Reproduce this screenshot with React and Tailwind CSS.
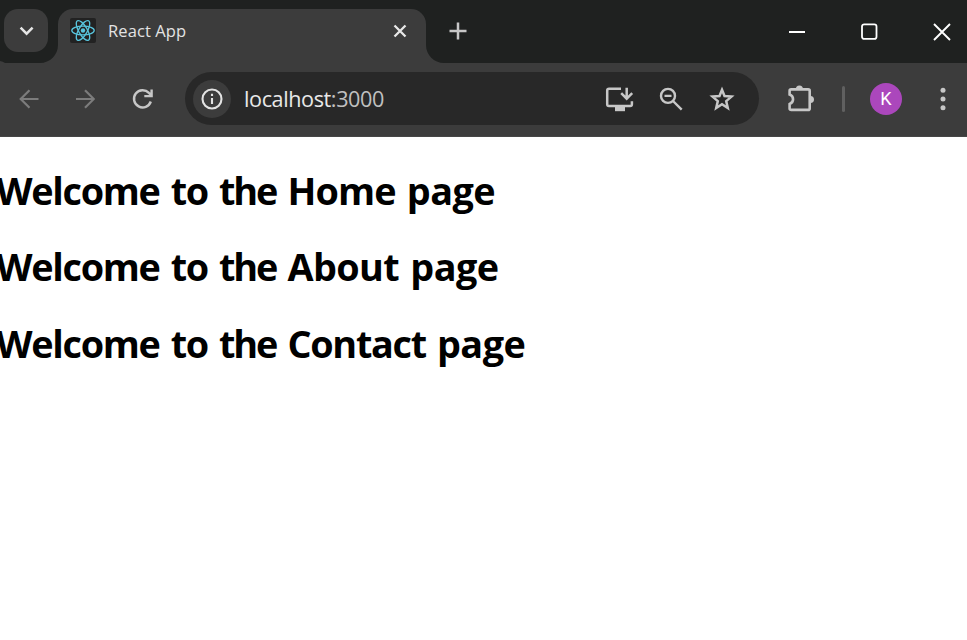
import React from 'react';

const ui = "font-['Open_Sans','Noto_Sans',sans-serif]";

function ReactLogo() {
  return (
    <svg width="26" height="25" viewBox="0 0 26 25" fill="none" stroke="#58c4dc" strokeWidth="1.3" className="shrink-0 rounded-[2px] bg-[#222222]">
      <ellipse cx="13" cy="12.5" rx="11.2" ry="4.3" />
      <ellipse cx="13" cy="12.5" rx="11.2" ry="4.3" transform="rotate(60 13 12.5)" />
      <ellipse cx="13" cy="12.5" rx="11.2" ry="4.3" transform="rotate(120 13 12.5)" />
      <circle cx="13" cy="12.5" r="2.2" fill="#58c4dc" stroke="none" />
    </svg>
  );
}

function TitleBar() {
  return (
    <div className="relative flex h-[62.5px] bg-[#1f2120] pl-1">
      <svg className="absolute bottom-0 left-0" width="5" height="3" fill="#3c3c3c"><path d="M0 1Q3 1.4 5 3H0Z" /></svg>
      <button className="mt-[9px] flex h-[43px] w-11 shrink-0 items-center justify-center rounded-[14px] bg-[#3c3c3c]">
        <svg width="16" height="12" viewBox="0 0 16 12" fill="none" stroke="#e6e6e6" strokeWidth="2.5"><path d="M2.6 2.7l6 6 6-6" /></svg>
      </button>
      <div className="relative mt-[8.5px] ml-[9.5px] flex h-[54px] w-[368px] shrink-0 rounded-t-[15px] bg-[#3c3c3c] pl-[12.5px]">
        <svg className="absolute bottom-0 -left-[18px]" width="18" height="18" fill="#3c3c3c"><path d="M18 0C18 10 10 18 0 18H18Z" /></svg>
        <svg className="absolute -right-[18px] bottom-0" width="18" height="18" fill="#3c3c3c"><path d="M0 0C0 10 8 18 18 18H0Z" /></svg>
        <div className="flex h-11 w-full items-center">
          <ReactLogo />
          <span className={`ml-3 w-[285px] text-[16.5px] leading-6 tracking-[0.1px] text-[#e3e3e3] ${ui}`}>React App</span>
          <svg width="14" height="14" viewBox="0 0 14 14" stroke="#e8e8e8" strokeWidth="2.3"><path d="M1.5 1.5l11 11M12.5 1.5l-11 11" /></svg>
        </div>
      </div>
      <svg className="mt-[22px] ml-[23px] shrink-0" width="18" height="18" viewBox="0 0 18 18" stroke="#c7c7c7" strokeWidth="2.5"><path d="M.5 9h17M9 .5v17" /></svg>
      <div className="mt-[22px] ml-auto flex items-center self-start pr-4 text-white">
        <svg className="mr-[54px]" width="18" height="20" viewBox="0 0 18 20" stroke="currentColor" strokeWidth="2"><path d="M0 10h16" /></svg>
        <svg className="mr-[54px]" width="18" height="20" viewBox="0 0 18 20" fill="none" stroke="currentColor" strokeWidth="1.8"><rect x="1" y="2.3" width="14.5" height="14.6" rx="2.2" /></svg>
        <svg width="18" height="20" viewBox="0 0 18 20" stroke="currentColor" strokeWidth="1.9"><path d="M1 2l16 16M17 2L1 18" /></svg>
      </div>
    </div>
  );
}

function Toolbar() {
  return (
    <div className="flex h-[74.5px] items-center border-b border-[#464646] bg-[#3c3c3c] pb-px">
      <svg className="ml-[19px] shrink-0" width="20" height="20" viewBox="0 0 20 20" fill="none" stroke="#7c7c7c" strokeWidth="2.2"><path d="M19.5 10H2M10.5 1.2L1.7 10l8.8 8.8" /></svg>
      <svg className="ml-9 shrink-0" width="20" height="20" viewBox="0 0 20 20" fill="none" stroke="#7c7c7c" strokeWidth="2.2"><path d="M1 10h17.5M10 1.2l8.8 8.8-8.8 8.8" /></svg>
      <svg className="ml-[37px] shrink-0" width="22" height="22" viewBox="0 0 22 22" fill="none" stroke="#c7c7c7" strokeWidth="2.4"><path d="M18.8 13.5a8.6 8.6 0 1 1-1.9-8.6L19.2 7.2M19.6 1.5v6.6h-7.3" /></svg>
      <div className="ml-[31px] flex h-[53px] w-[574px] shrink-0 items-center rounded-full bg-[#282828] pl-2">
        <div className="flex size-[38px] shrink-0 items-center justify-center rounded-full bg-[#3c3c3c]">
          <svg width="22" height="22" viewBox="0 0 22 22" fill="none" stroke="#e3e3e3" strokeWidth="2.1"><circle cx="11" cy="11" r="9.5" /><path d="M11 10v6M11 5.8v2.2" /></svg>
        </div>
        <span className={`ml-[13px] w-[361px] text-[21.6px] leading-8 tracking-[-0.4px] text-[#e8e8e8] ${ui}`}>localhost<span className="text-[#c0c0c0]">:3000</span></span>
        <svg className="shrink-0" width="30" height="26" viewBox="0 0 30 26" fill="none" stroke="#c7c7c7" strokeWidth="2.5"><path d="M16 2.7H4Q2.2 2.7 2.2 4.5v13.8Q2.2 20.1 4 20.1h21.1q1.8 0 1.8-1.8v-3" /><path d="M21.7 1.7v11M16.2 7.2l5.5 5.5 5.5-5.5" /><path fill="#c7c7c7" stroke="none" d="M10 21h10v4.2H10z" /></svg>
        <svg className="ml-[24px] shrink-0" width="24" height="24" viewBox="0 0 24 24" fill="none" stroke="#c7c7c7" strokeWidth="2.4"><circle cx="9" cy="8.9" r="7" /><path d="M5.5 8.9h7M14 14l8.7 8.7" /></svg>
        <svg className="ml-[26px] shrink-0" width="26" height="26" viewBox="0 0 26 26" fill="none" stroke="#c7c7c7" strokeWidth="2.5"><path d="M13 3.8l2.5 6.2 7 .6-5.3 4.5 1.6 6.9-5.8-3.7-5.8 3.7 1.6-6.9-5.3-4.5 7-.6Z" /></svg>
      </div>
      <svg className="ml-[28px] shrink-0" width="28" height="28" viewBox="0 0 28 28" fill="none" stroke="#c7c7c7" strokeWidth="2.6"><path d="M4.2 4.4h17q1.5 0 1.5 1.5v17.5q0 1.5-1.5 1.5h-17q-1.6 0-1.6-1.5v-4.3c4.6-1.6 4.6-7.9 0-9.5V5.9q0-1.5 1.6-1.5Z" /><path fill="#c7c7c7" stroke="none" d="M8.9 4a3.5 3.5 0 0 1 7 0ZM23.5 11a3.4 3.4 0 0 1 0 7Z" /></svg>
      <div className="ml-[27px] h-[26px] w-[3px] shrink-0 rounded-full bg-[#606060]" />
      <div className="ml-[25px] flex size-8 shrink-0 items-center justify-center rounded-full bg-[#ab47bc] font-[Roboto,sans-serif] text-[18px] font-normal text-white">K</div>
      <svg className="ml-[38px] shrink-0" width="6" height="24" viewBox="0 0 6 24" fill="#c7c7c7"><circle cx="3" cy="3.2" r="2.5" /><circle cx="3" cy="12" r="2.5" /><circle cx="3" cy="20.7" r="2.5" /></svg>
    </div>
  );
}

function Heading({ children }) {
  return (
    <h1>
      <span className="tracking-[-1.3px]">Welcome</span>{' '}
      <span className="tracking-[-1.3px]">to</span>{' '}
      <span className="tracking-[-2.1px]">the</span>{' '}
      {children}{' '}
      <span className="tracking-[-0.5px]">page</span>
    </h1>
  );
}

export default function App() {
  return (
    <div className="h-[640px] w-[967px] overflow-hidden bg-white">
      <TitleBar />
      <Toolbar />
      <main className={`-ml-[4px] flex flex-col gap-[24.5px] pt-[27.75px] text-[37.8px] leading-[52px] font-bold whitespace-nowrap text-black [word-spacing:1.3px] ${ui}`}>
        <Heading><span className="tracking-[-0.9px]">Home</span></Heading>
        <Heading><span className="tracking-[-0.6px]">About</span></Heading>
        <Heading><span className="tracking-[-1.3px]">Contact</span></Heading>
      </main>
    </div>
  );
}
